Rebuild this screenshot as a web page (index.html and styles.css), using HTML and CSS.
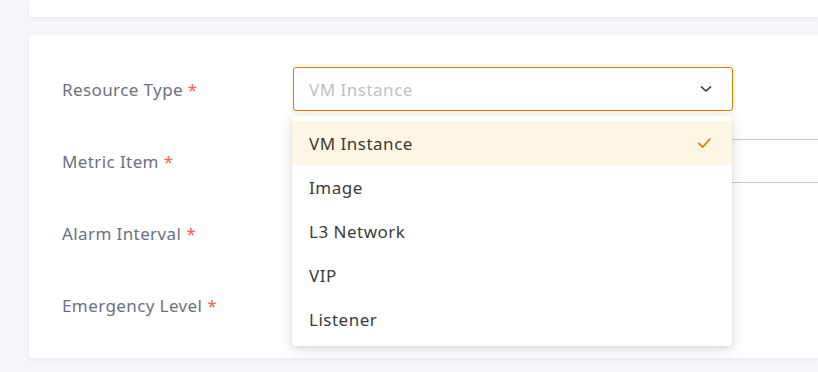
FILE: index.html
```html
<!DOCTYPE html>
<html>
<head>
<meta charset="utf-8">
<link rel="stylesheet" href="styles.css">
</head>
<body>
<div class="page">
  <div class="card card-top"></div>
  <div class="card card-form">
    <div class="row">
      <div class="label">Resource Type <span class="req">*</span></div>
      <div class="control">
        <div class="select focused">
          <span class="placeholder">VM Instance</span>
          <svg class="chev" width="12" height="8" viewBox="0 0 12 8"><path d="M1 1.5 L6 6 L11 1.5" fill="none" stroke="#333" stroke-width="1.6"/></svg>
        </div>
        <div class="dropdown">
          <div class="opt selected"><span>VM Instance</span>
            <svg class="check" width="15" height="12" viewBox="0 0 15 12"><path d="M1.5 6 L5.5 10 L13.5 1.5" fill="none" stroke="#e07b00" stroke-width="1.8"/></svg>
          </div>
          <div class="opt"><span>Image</span></div>
          <div class="opt"><span>L3 Network</span></div>
          <div class="opt"><span>VIP</span></div>
          <div class="opt"><span>Listener</span></div>
        </div>
      </div>
    </div>
    <div class="row">
      <div class="label">Metric Item <span class="req">*</span></div>
      <div class="control"><div class="input wide"></div></div>
    </div>
    <div class="row">
      <div class="label">Alarm Interval <span class="req">*</span></div>
      <div class="control"></div>
    </div>
    <div class="row">
      <div class="label">Emergency Level <span class="req">*</span></div>
      <div class="control"></div>
    </div>
  </div>
</div>
</body>
</html>
```

FILE: styles.css
```css
* { box-sizing: border-box; }
html, body { margin: 0; padding: 0; }
body {
  background: #f5f6fa;
  font-family: "Noto Sans", "Open Sans", sans-serif;
  width: 818px;
  height: 372px;
  overflow: hidden;
}
.page {
  padding-left: 29px;
  display: flex;
  flex-direction: column;
  gap: 18px;
}
.card {
  background: #fff;
  border-radius: 3px 0 0 3px;
  box-shadow: 0 2px 4px rgba(0, 0, 0, 0.05);
}
.card-top { height: 17px; border-radius: 0 0 0 3px; }
.card-form {
  padding: 32px 0 31px 33px;
  display: flex;
  flex-direction: column;
  gap: 28px;
}
.row {
  display: flex;
  align-items: center;
  height: 44px;
}
.label {
  width: 231px;
  flex-shrink: 0;
  font-size: 17px;
  color: #6a7083;
  letter-spacing: 0.4px;
}
.req { color: #ff5a4f; }
.control {
  position: relative;
  flex: 1;
  height: 44px;
}
.select {
  width: 440px;
  height: 44px;
  border: 1px solid #e07800;
  border-radius: 3px;
  box-shadow: 0 0 0 3px rgba(255, 196, 90, 0.12);
  display: flex;
  align-items: center;
  justify-content: space-between;
  padding: 0 20px 0 15px;
  background: #fff;
}
.placeholder { color: #bfbfbf; font-size: 17px; letter-spacing: 0.5px; }
.input.wide {
  width: 100%;
  height: 44px;
  border: 1px solid #c8c8c8;
  border-right: none;
  border-radius: 3px 0 0 3px;
}
.dropdown {
  position: absolute;
  top: 49px;
  left: -1px;
  width: 440px;
  background: #fff;
  border-radius: 4px;
  padding: 5px 0;
  box-shadow: 0 3px 14px rgba(0, 0, 0, 0.14), 0 1px 4px rgba(0, 0, 0, 0.06);
  z-index: 10;
}
.opt {
  height: 44px;
  display: flex;
  align-items: center;
  justify-content: space-between;
  padding: 0 20px 0 17px;
  font-size: 17px;
  letter-spacing: 0.5px;
  color: #3a3a3a;
}
.opt.selected { background: #fef6e5; }
```
